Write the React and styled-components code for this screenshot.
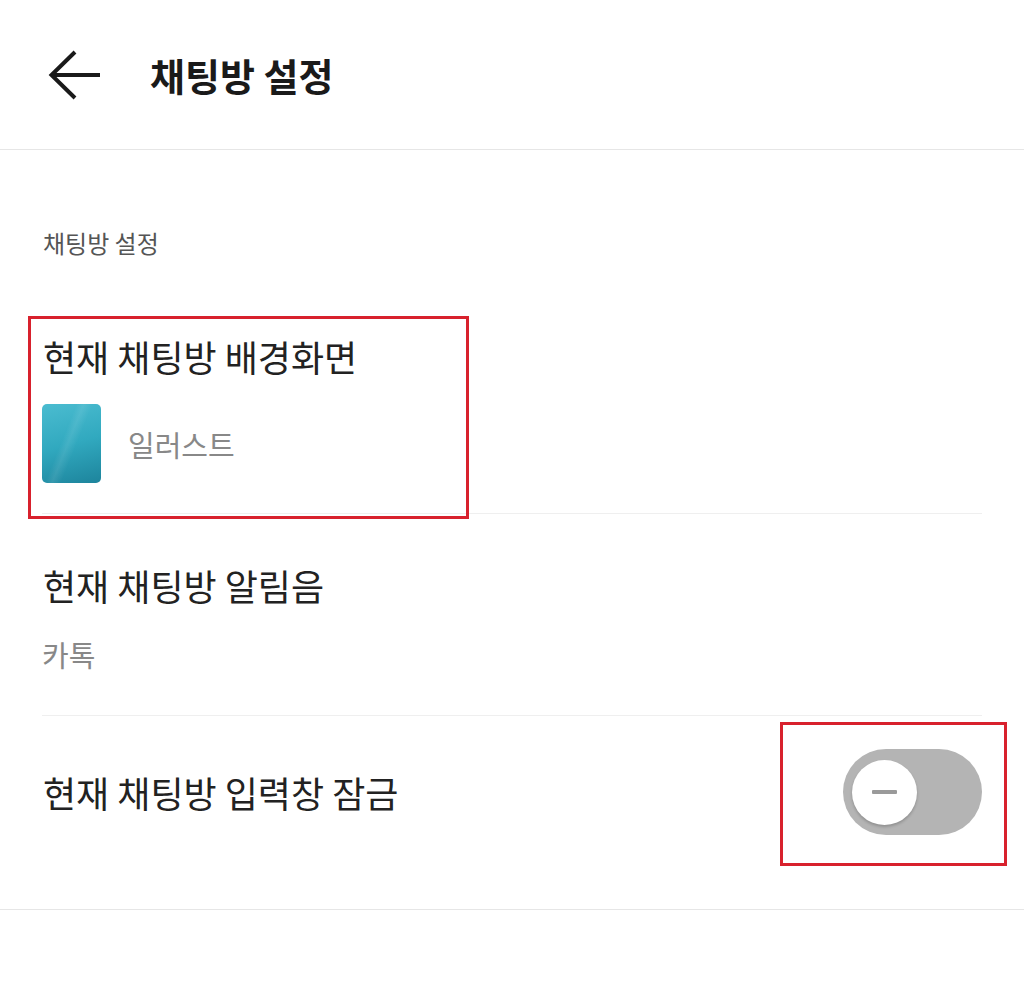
import React from 'react'
import styled, { createGlobalStyle } from 'styled-components'

const GlobalStyle = createGlobalStyle`
  html, body {
    margin: 0;
    padding: 0;
    background: #ffffff;
  }
  body {
    font-family: "Noto Sans CJK KR", "Noto Sans", sans-serif;
    color: #222;
  }
`

const Page = styled.div`
  position: relative;
  width: 1024px;
  height: 981px;
  background: #fff;
  overflow: hidden;
`

const Header = styled.header`
  height: 150px;
  display: flex;
  align-items: center;
  border-bottom: 1px solid #e6e6e6;
  box-sizing: border-box;
  padding-left: 46px;
  gap: 46px;
`

const BackButton = styled.button`
  width: 58px;
  height: 58px;
  padding: 0;
  border: 0;
  background: none;
  display: flex;
  align-items: center;
  justify-content: center;
`

const Title = styled.h1`
  margin: 0;
  font-size: 38px;
  font-weight: 700;
  color: #1a1a1a;
  line-height: 44px;
`

const Section = styled.section`
  border-bottom: 1px solid #e6e6e6;
`

const SectionLabel = styled.div`
  padding: 78px 43px 0;
  font-size: 24px;
  line-height: 30px;
  color: #555;
`

const Row = styled.div`
  margin: 0 42px;
  padding: ${p => p.$pad};
  display: flex;
  flex-direction: ${p => (p.$inline ? 'row' : 'column')};
  align-items: ${p => (p.$inline ? 'center' : 'flex-start')};
  justify-content: space-between;
  border-bottom: ${p => (p.$last ? '0' : '1px solid #efefef')};
`

const RowTitle = styled.div`
  font-size: 36px;
  line-height: 44px;
  color: #222;
  padding-left: 1px;
`

const SubText = styled.div`
  font-size: 29px;
  line-height: 36px;
  color: #888;
  margin-top: ${p => p.$mt || 0}px;
`

const WallpaperRow = styled.div`
  display: flex;
  align-items: center;
  gap: 27px;
  margin-top: 26px;
`

const Thumb = styled.div`
  width: 59px;
  height: 79px;
  border-radius: 5px;
  background:
    linear-gradient(112deg, rgba(255,255,255,0) 38%, rgba(255,255,255,0.09) 46%, rgba(255,255,255,0) 56%),
    linear-gradient(165deg, #4bbcd0 0%, #31a9bf 50%, #1d849c 100%);
`

const Toggle = styled.div`
  width: 139px;
  height: 86px;
  border-radius: 43px;
  background: #b4b4b4;
  display: flex;
  align-items: center;
  padding-left: 9px;
  box-sizing: border-box;
`

const Knob = styled.div`
  width: 65px;
  height: 65px;
  border-radius: 50%;
  background: #fff;
  box-shadow: 0 2px 3px rgba(0, 0, 0, 0.2);
  display: flex;
  align-items: center;
  justify-content: center;

  &::after {
    content: '';
    width: 25px;
    height: 4px;
    border-radius: 1px;
    background: #9a9a9a;
  }
`

const Highlight = styled.div`
  position: absolute;
  left: ${p => p.$x}px;
  top: ${p => p.$y}px;
  width: ${p => p.$w}px;
  height: ${p => p.$h}px;
  border: 3px solid #d8212d;
  box-sizing: border-box;
  pointer-events: none;
`

const BackArrow = () => (
  <svg width="58" height="58" viewBox="0 0 58 58" fill="none">
    <path d="M54 29H6" stroke="#1a1a1a" strokeWidth="4" />
    <path d="M29 6L5.5 29L29 52" stroke="#1a1a1a" strokeWidth="4" strokeLinejoin="miter" />
  </svg>
)

export default function App() {
  return (
    <Page>
      <GlobalStyle />
      <Header>
        <BackButton aria-label="뒤로">
          <BackArrow />
        </BackButton>
        <Title>채팅방 설정</Title>
      </Header>

      <Section>
        <SectionLabel>채팅방 설정</SectionLabel>

        <Row $pad="76px 0 30px">
          <RowTitle>현재 채팅방 배경화면</RowTitle>
          <WallpaperRow>
            <Thumb />
            <SubText>일러스트</SubText>
          </WallpaperRow>
        </Row>

        <Row $pad="49px 0 43px">
          <RowTitle>현재 채팅방 알림음</RowTitle>
          <SubText $mt={29}>카톡</SubText>
        </Row>

        <Row $inline $last $pad="33px 0 74px">
          <RowTitle>현재 채팅방 입력창 잠금</RowTitle>
          <Toggle>
            <Knob />
          </Toggle>
        </Row>
      </Section>

      <Highlight $x={28} $y={316} $w={441} $h={203} />
      <Highlight $x={780} $y={722} $w={227} $h={144} />
    </Page>
  )
}
